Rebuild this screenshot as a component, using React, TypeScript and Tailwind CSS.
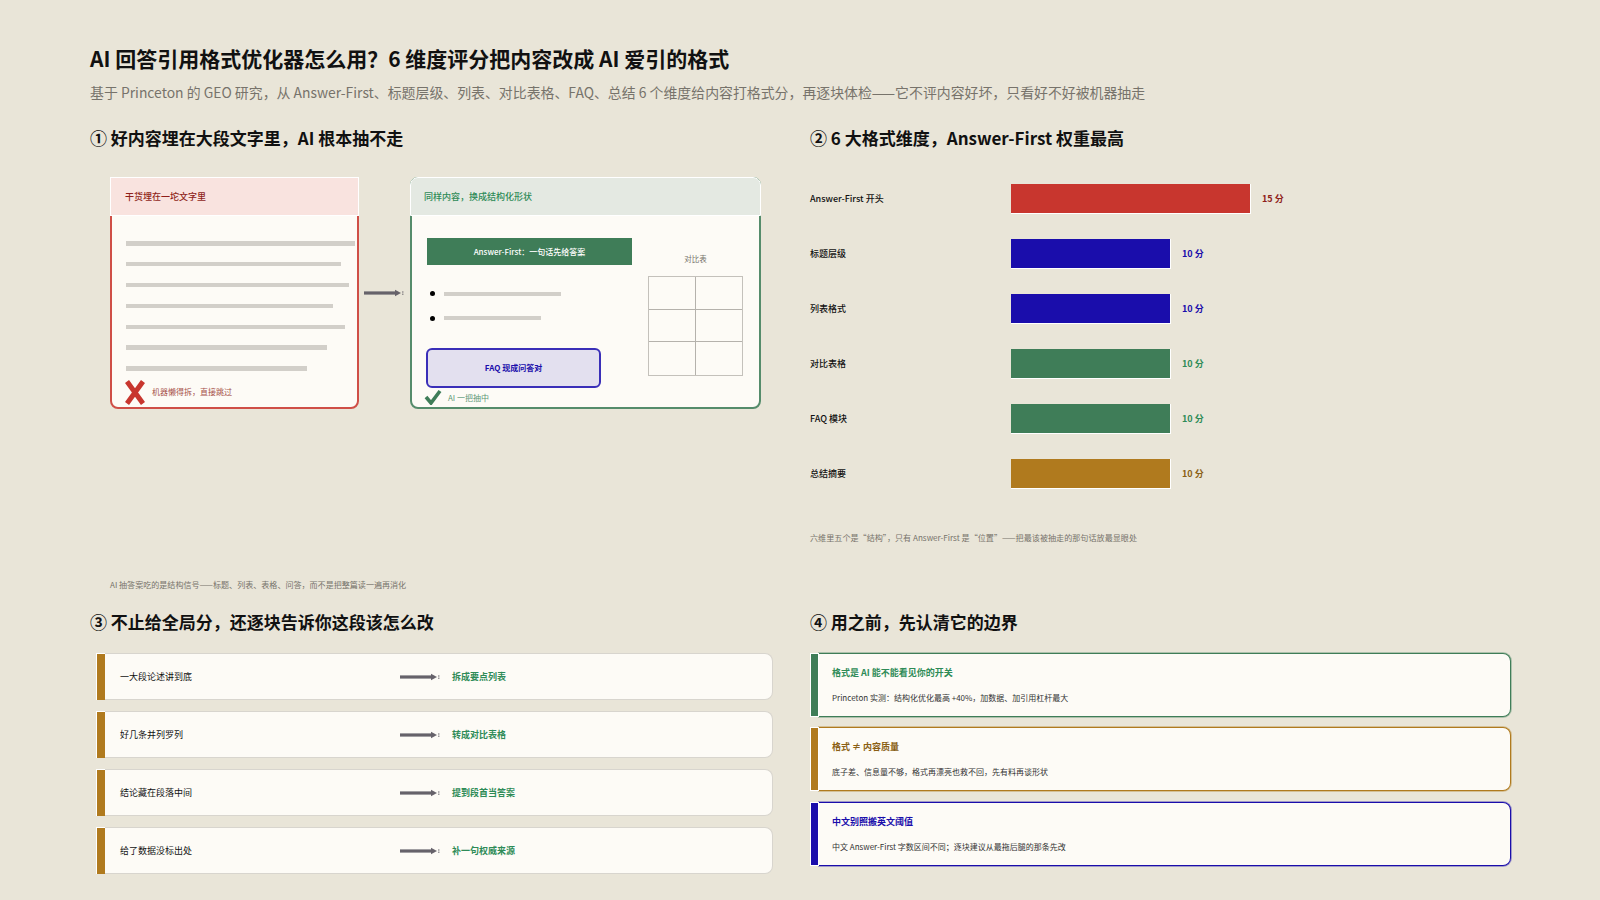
const lines = ["w-[229px]", "w-[215px]", "w-[223px]", "w-[207px]", "w-[219px]", "w-[201px]", "w-[181px]"];

const bars = [
  { label: "Answer-First 开头", value: "15 分", bar: "w-[240px] bg-[#c8362e]", text: "text-[#8f1f1a]" },
  { label: "标题层级", value: "10 分", bar: "w-[160px] bg-[#1a0dab]", text: "text-[#1a0dab]" },
  { label: "列表格式", value: "10 分", bar: "w-[160px] bg-[#1a0dab]", text: "text-[#1a0dab]" },
  { label: "对比表格", value: "10 分", bar: "w-[160px] bg-[#3f7d58]", text: "text-[#2e8b57]" },
  { label: "FAQ 模块", value: "10 分", bar: "w-[160px] bg-[#3f7d58]", text: "text-[#2e8b57]" },
  { label: "总结摘要", value: "10 分", bar: "w-[160px] bg-[#b07a1e]", text: "text-[#8a5f14]" },
];

const fixes = [
  ["一大段论述讲到底", "拆成要点列表"],
  ["好几条并列罗列", "转成对比表格"],
  ["结论藏在段落中间", "提到段首当答案"],
  ["给了数据没标出处", "补一句权威来源"],
];

const limits = [
  {
    title: "格式是 AI 能不能看见你的开关",
    body: "Princeton 实测\uFF1A结构化优化最高 +40%\uFF0C加数据、加引用杠杆最大",
    card: "border-[#3f7d58] shadow-[0_0_0_1px_rgba(63,125,88,0.35)]",
    side: "bg-[#3f7d58]",
    text: "text-[#2e8b57]",
  },
  {
    title: "格式 ≠ 内容质量",
    body: "底子差、信息量不够\uFF0C格式再漂亮也救不回\uFF0C先有料再谈形状",
    card: "border-[#b07a1e] shadow-[0_0_0_1px_rgba(176,122,30,0.35)]",
    side: "bg-[#b07a1e]",
    text: "text-[#8a5f14]",
  },
  {
    title: "中文别照搬英文阈值",
    body: "中文 Answer-First 字数区间不同\uFF1B逐块建议从最拖后腿的那条先改",
    card: "border-[#1a0dab] shadow-[0_0_0_1px_rgba(26,13,171,0.35)]",
    side: "bg-[#1a0dab]",
    text: "text-[#1a0dab]",
  },
];

function Arrow({ className }: { className: string }) {
  return (
    <svg viewBox="0 0 40 8" className={className}>
      <rect x="0" y="2.4" width="31" height="3.2" fill="#66626a" />
      <path d="M31 0.8 L37 4 L31 7.2 Z" fill="#66626a" />
      <rect x="38.2" y="2.4" width="1.2" height="1.2" fill="#66626a" />
      <rect x="38.2" y="4.6" width="1.2" height="1.2" fill="#66626a" />
    </svg>
  );
}

function Heading({ children }: { children: string }) {
  return <h2 className="text-[17px] leading-[26px] font-bold text-[#111]">{children}</h2>;
}

export default function App() {
  return (
    <div className="min-h-screen w-[1600px] h-[900px] overflow-hidden bg-[#e9e5d8] pl-[90px] pt-[43px] font-['Noto_Sans_CJK_SC','Noto_Sans',sans-serif] text-[#111]">
      <h1 className="text-[21px] leading-[30px] font-bold">AI 回答引用格式优化器怎么用&#xFF1F;6 维度评分把内容改成 AI 爱引的格式</h1>
      <p className="mt-[8px] text-[13.9px] leading-[22px] text-[#77736b]">
        基于 Princeton 的 GEO 研究&#xFF0C;从 Answer-First、标题层级、列表、对比表格、FAQ、总结 6 个维度给内容打格式分&#xFF0C;再逐块体检——它不评内容好坏&#xFF0C;只看好不好被机器抽走
      </p>

      <div className="mt-[22px] flex">
        {/* 1: wall of text vs structured */}
        <section className="w-[720px]">
          <Heading>① 好内容埋在大段文字里&#xFF0C;AI 根本抽不走</Heading>
          <div className="mt-[26px] ml-[20px] flex items-start">
            <div className="relative h-[232px] w-[249px] rounded-[8px] border-2 border-[#cf4f47] bg-[#fdfbf6]">
              <div className="-mx-[2px] -mt-[2px] flex h-[39px] items-center border border-white bg-[#f9e3df] pl-[14px] text-[9px] font-medium text-[#8f1f1a]">
                干货埋在一坨文字里
              </div>
              <div className="mt-[25px] ml-[14px] flex flex-col gap-[16.3px]">
                {lines.map((w) => (
                  <div key={w} className={`h-[4.6px] bg-[#d2cfc9] ${w}`} />
                ))}
              </div>
              <div className="mt-[9px] ml-[13px] flex items-center gap-[7px]">
                <svg viewBox="0 0 20 24" className="h-[25px] w-[20px]">
                  <path d="M2 1 L18 23 M18 1 L2 23" stroke="#c8362e" strokeWidth="5" fill="none" />
                </svg>
                <span className="text-[8px] text-[#a6504a]">机器懒得拆&#xFF0C;直接跳过</span>
              </div>
            </div>

            <Arrow className="mt-[112px] ml-[5px] h-[8px] w-[40px] shrink-0" />

            <div className="relative ml-[6px] h-[232px] w-[351px] rounded-[8px] border-2 border-[#558c6b] bg-[#fdfbf6]">
              <div className="-mx-[2px] -mt-[2px] flex h-[39px] items-center rounded-t-[8px] border border-white bg-[#e4e9e2] pl-[13px] text-[9px] font-medium text-[#2e8b57]">
                同样内容&#xFF0C;换成结构化形状
              </div>
              <div className="flex">
                <div className="ml-[15px] w-[222px]">
                  <div className="mt-[22px] flex h-[27px] w-[205px] items-center justify-center bg-[#3f7d58] text-[8px] font-medium text-white">
                    Answer-First&#xFF1A;一句话先给答案
                  </div>
                  <div className="mt-[26px] flex items-center">
                    <span className="ml-[3px] h-[5px] w-[5px] rounded-full bg-black" />
                    <span className="ml-[9px] h-[4px] w-[117px] bg-[#d2cfc9]" />
                  </div>
                  <div className="mt-[19.5px] flex items-center">
                    <span className="ml-[3px] h-[5px] w-[5px] rounded-full bg-black" />
                    <span className="ml-[9px] h-[4px] w-[97px] bg-[#d2cfc9]" />
                  </div>
                  <div className="-ml-px mt-[27px] flex h-[40px] w-[175px] items-center justify-center rounded-[6px] border-2 border-[#3a2fb8] bg-[#e3e0ef] text-[8px] font-bold text-[#1a0dab]">
                    FAQ 现成问答对
                  </div>
                </div>
                <div className="ml-[-1px] w-[95px]">
                  <div className="mt-[37px] text-center text-[7.5px] leading-[12px] text-[#77736b]">对比表</div>
                  <div className="mt-[11px] grid h-[100px] grid-cols-2 grid-rows-3 border border-[#c4c1bb]">
                    <div className="border-r border-b border-[#b5b2ac]" />
                    <div className="border-b border-[#b5b2ac]" />
                    <div className="border-r border-b border-[#b5b2ac]" />
                    <div className="border-b border-[#b5b2ac]" />
                    <div className="border-r border-[#b5b2ac]" />
                    <div />
                  </div>
                </div>
              </div>
              <div className="mt-px ml-[12px] flex items-center gap-[6px]">
                <svg viewBox="0 0 18 16" className="h-[16px] w-[18px]">
                  <path d="M2 8 L7 14 L16 2" stroke="#3f7d58" strokeWidth="3.6" fill="none" />
                </svg>
                <span className="pt-[2px] text-[8px] text-[#5c9877]">AI 一把抽中</span>
              </div>
            </div>
          </div>
          <p className="mt-[170px] ml-[20px] text-[8.06px] leading-[12px] text-[#77736b]">
            AI 抽答案吃的是结构信号——标题、列表、表格、问答&#xFF0C;而不是把整篇读一遍再消化
          </p>
        </section>

        {/* 2: score bars */}
        <section className="w-[700px]">
          <Heading>② 6 大格式维度&#xFF0C;Answer-First 权重最高</Heading>
          <div className="mt-[33px] flex flex-col gap-[25px]">
            {bars.map((b) => (
              <div key={b.label} className="flex h-[30px] items-center">
                <span className="w-[201px] text-[9px] font-medium">{b.label}</span>
                <span className={`h-[30px] border-r border-b border-white ${b.bar}`} />
                <span className={`ml-[11px] text-[9px] font-bold ${b.text}`}>{b.value}</span>
              </div>
            ))}
          </div>
          <p className="mt-[43px] text-[8.1px] leading-[12px] text-[#77736b]">
            六维里五个是“结构”&#xFF0C;只有 Answer-First 是“位置”——把最该被抽走的那句话放最显眼处
          </p>
        </section>
      </div>

      <div className="mt-[18px] flex">
        {/* 3: per-block fixes */}
        <section className="w-[720px]">
          <Heading>③ 不止给全局分&#xFF0C;还逐块告诉你这段该怎么改</Heading>
          <div className="mt-[18px] ml-[6px] flex flex-col gap-[11px]">
            {fixes.map(([from, to]) => (
              <div key={from} className="flex h-[47px] w-[677px]">
                <span className="w-[9px] shrink-0 border-t border-l border-white bg-[#b07a1e]" />
                <div className="flex flex-1 rounded-r-[8px] border-y border-r border-[#d8d5ce] bg-[#fdfbf6]">
                  <span className="ml-[15px] w-[280px] self-center text-[9px]">{from}</span>
                  <Arrow className="h-[8px] w-[40px] shrink-0 self-center" />
                  <span className="ml-[12px] self-center text-[9px] font-bold text-[#2e8b57]">{to}</span>
                </div>
              </div>
            ))}
          </div>
        </section>

        {/* 4: limits */}
        <section className="w-[700px]">
          <Heading>④ 用之前&#xFF0C;先认清它的边界</Heading>
          <div className="mt-[17.5px] flex flex-col gap-[10.5px]">
            {limits.map((l) => (
              <div key={l.title} className="flex h-[64px] w-[701px]">
                <div className={`order-2 flex flex-1 rounded-r-[8px] border-y border-r bg-[#fdfbf6] ${l.card}`}>
                  <div className="ml-[13px] flex flex-col justify-center gap-[12px]">
                    <span className={`text-[9px] leading-[14px] font-bold ${l.text}`}>{l.title}</span>
                    <span className="text-[8px] leading-[12px] text-[#333]">{l.body}</span>
                  </div>
                </div>
                <span className={`relative order-1 w-[9px] shrink-0 border border-white ${l.side}`} />
              </div>
            ))}
          </div>
        </section>
      </div>
    </div>
  );
}
